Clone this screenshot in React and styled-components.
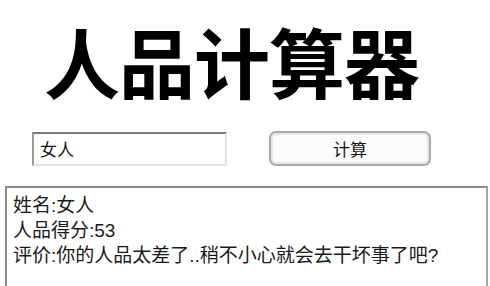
import styled, { createGlobalStyle } from "styled-components";

const GlobalStyle = createGlobalStyle`
  body {
    margin: 0;
    background: #fff;
    font-family: "Liberation Sans", "Noto Sans CJK SC", sans-serif;
    overflow: hidden;
  }
`;

const Page = styled.div`
  width: 490px;
  height: 286px;
  overflow: hidden;
`;

const Title = styled.h1`
  margin: 0;
  padding: 22px 0 0 44px;
  height: 120px;
  box-sizing: border-box;
  font-family: "Noto Sans CJK SC", sans-serif;
  font-size: 76px;
  font-weight: 700;
  line-height: 1;
  color: #000;
  letter-spacing: -1px;
`;

const Form = styled.div`
  display: flex;
  align-items: center;
  gap: 42px;
  padding: 11px 0 0 32px;
  height: 35px;
`;

const NameInput = styled.input`
  width: 195px;
  height: 34px;
  box-sizing: border-box;
  border: 2px solid;
  border-color: #7a7a7a #e2e2e2 #e2e2e2 #9a9a9a;
  padding: 0 6px;
  font-family: "Noto Sans CJK SC", sans-serif;
  font-size: 17px;
  color: #111;
  outline: none;
`;

const CalcButton = styled.button`
  width: 162px;
  height: 35px;
  box-sizing: border-box;
  border: 2px solid #a9a9a9;
  border-radius: 7px;
  background: #fbfbfb;
  box-shadow: inset 0 0 0 2px #e6e6e6;
  font-family: "Noto Sans CJK SC", sans-serif;
  font-size: 17px;
  color: #111;
  padding: 0;
`;

const Result = styled.div`
  margin: 20px 0 0 5px;
  width: 483px;
  height: 140px;
  box-sizing: border-box;
  border: 2px solid;
  border-color: #8c8c8c #a8a8a8 #a8a8a8 #8c8c8c;
  padding: 5px 6px;
  font-family: "Liberation Sans", "Noto Sans CJK SC", sans-serif;
  font-size: 19px;
  line-height: 25px;
  color: #1a1a1a;
`;

const Line = styled.div`
  white-space: nowrap;
`;

export default function App() {
  return (
    <Page>
      <GlobalStyle />
      <Title>人品计算器</Title>
      <Form>
        <NameInput defaultValue="女人" />
        <CalcButton>计算</CalcButton>
      </Form>
      <Result>
        <Line>姓名:女人</Line>
        <Line>人品得分:53</Line>
        <Line>评价:你的人品太差了..稍不小心就会去干坏事了吧?</Line>
      </Result>
    </Page>
  );
}
